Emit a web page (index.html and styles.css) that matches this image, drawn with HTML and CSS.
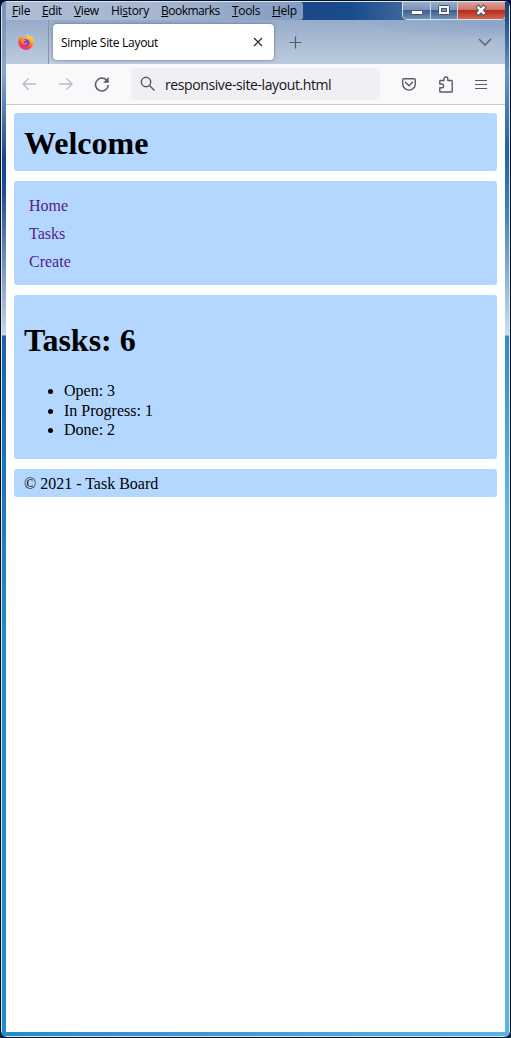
FILE: index.html
```html
<!DOCTYPE html>
<html lang="en">
<head>
<meta charset="utf-8">
<title>Simple Site Layout</title>
<link rel="stylesheet" href="styles.css">
</head>
<body>
<div class="desktop">
<div class="window">
  <div class="edge edge-left"></div>
  <div class="client">
    <div class="titlebar">
      <div class="menu">
        <span class="m-file"><u>F</u>ile</span><span class="m-edit"><u>E</u>dit</span><span class="m-view"><u>V</u>iew</span><span class="m-history">Hi<u>s</u>tory</span><span class="m-bookmarks"><u>B</u>ookmarks</span><span class="m-tools"><u>T</u>ools</span><span class="m-help"><u>H</u>elp</span>
      </div>
      <div class="controls">
        <div class="control"><svg width="28" height="18"><rect x="8.500" y="8.500" width="11" height="4" rx="1" fill="#fff" stroke="#46536a"/></svg></div>
        <div class="control"><svg width="26" height="18"><rect x="7.500" y="3.500" width="11" height="9" rx="1" fill="#f5f5f5" stroke="#46536a"/><rect x="10.500" y="6.500" width="5" height="3" fill="#7994b5" stroke="#46536a"/></svg></div>
        <div class="control close"><svg width="46" height="18"><path d="M20.500 5.500l5 5.500M25.500 5.500l-5 5.500" stroke="#535666" stroke-width="4.600" stroke-linecap="square"/><path d="M20.500 5.500l5 5.500M25.500 5.500l-5 5.500" stroke="#fff" stroke-width="2.600" stroke-linecap="square"/></svg></div>
      </div>
    </div>
    <div class="tabs">
      <div class="pinned">
        <svg width="18" height="18" viewBox="0 0 18 18">
          <defs>
            <linearGradient id="flame" x1=".8" y1="0" x2=".25" y2="1"><stop offset="0" stop-color="#fff044"/><stop offset=".35" stop-color="#ffae27"/><stop offset=".65" stop-color="#ff4b3b"/><stop offset="1" stop-color="#e9207c"/></linearGradient>
          </defs>
          <path d="M11 1c.4 1.500 1.500 2.200 2.600 3.300l.7-.9c1.600 1.600 2.400 3.700 2.400 5.700a7.700 7.700 0 0 1-15.400.3c-.1-2.200.7-4.200 2-5.600l.6 1.300 1.500-1.900.8 1.500c1-.2 2.400-.2 3.400.4C9.300 3.600 9.700 2 11 1z" fill="url(#flame)"/>
          <path d="M6.200 6.500c2-.9 6.200-.4 6.400 2.700.1 2.500-1.700 4-3.700 4s-3.800-1.600-3.800-3.700c0-1.200.4-2.200 1.100-3z" fill="#7542e5"/>
          <path d="M4.200 6.500c1.500-.6 3.300-.4 4.500.9-.7 1.200-2.200.9-2.500 2.100 1.500 1.400 3.200.8 4.300-.2-.2 2.100-2.300 3-4 2.300-1.800-.8-2.700-2.900-2.300-5.100z" fill="#ff8b1f"/>
        </svg>
      </div>
      <div class="tab">
        <span class="tab-title">Simple Site Layout</span>
        <svg width="10" height="10"><path d="M1 1l8 8M9 1l-8 8" stroke="#25242c" stroke-width="1.200"/></svg>
      </div>
      <svg class="plus" width="13" height="13"><path d="M6.500 .5v12M.5 6.500h12" stroke="#555866" stroke-width="1.200"/></svg>
      <svg class="chevron" width="14" height="9"><path d="M1 1l6 6 6-6" fill="none" stroke="#5b5b68" stroke-width="1.300"/></svg>
    </div>
    <div class="toolbar">
      <svg class="back" width="16" height="14"><path d="M15 7H1.500M7.500 1.500l-5.500 5.500 5.500 5.500" fill="none" stroke="#bbbbc0" stroke-width="1.400"/></svg>
      <svg class="forward" width="16" height="14"><path d="M1 7h13.500M8.500 1.500l5.500 5.500-5.500 5.500" fill="none" stroke="#bbbbc0" stroke-width="1.400"/></svg>
      <svg class="reload" width="16" height="16"><path d="M13.800 6A6.400 6.400 0 1 0 14.300 9" fill="none" stroke="#5b5b66" stroke-width="1.500"/><path d="M14.700 1v5.800H9z" fill="#5b5b66"/></svg>
      <div class="address">
        <svg width="16" height="16"><circle cx="6" cy="6" r="4.700" fill="none" stroke="#5b5b66" stroke-width="1.500"/><path d="M9.500 9.500l5 5" stroke="#5b5b66" stroke-width="1.500"/></svg>
        <span class="url">responsive-site-layout.html</span>
      </div>
      <svg class="pocket" width="14" height="13"><path d="M2 .8h10q1.300 0 1.300 1.300v4a6.300 6 0 0 1-12.600 0v-4Q.7.800 2 .8zM3.500 4.300L7 7.700l3.500-3.400" fill="none" stroke="#5b5b66" stroke-width="1.400" stroke-linecap="round" stroke-linejoin="round"/></svg>
      <svg class="extension" width="14" height="17"><path d="M.8 15.700V11.800H2.500q2.100 0 2.100-1.900T2.500 8H.8V5.100Q.8 4.500 1.500 4.500H5V3q0-2 1.900-2t1.900 2v1.500h3.600q.8 0 .8.800v9.900q0 .8-.8.800H1.500q-.7 0-.7-.3z" fill="none" stroke="#5b5b66" stroke-width="1.400" stroke-linejoin="round"/></svg>
      <svg class="hamburger" width="12" height="11"><path d="M0 1.500h12M0 5.500h12M0 9.500h12" stroke="#5b5b66" stroke-width="1.200"/></svg>
    </div>
    <div class="page">
      <header class="box page-header"><h1>Welcome</h1></header>
      <nav class="box"><a>Home</a><a>Tasks</a><a>Create</a></nav>
      <main class="box">
        <h1>Tasks: 6</h1>
        <ul><li>Open: 3</li><li>In Progress: 1</li><li>Done: 2</li></ul>
      </main>
      <footer class="box">© 2021 - Task Board</footer>
    </div>
  </div>
  <div class="edge edge-right"></div>
</div>
</div>
</body>
</html>
```
FILE: styles.css
```css
* { box-sizing: border-box; }
html, body { margin: 0; height: 100%; overflow: hidden; }
svg { display: block; flex: none; }
.desktop { height: 1038px; background: linear-gradient(#000a40, #0b2b40); }
.window {
  height: 1038px;
  display: grid;
  grid-template-columns: 4px 1fr 4px;
  border: 1px solid #07111f;
  border-radius: 7px;
  overflow: hidden;
  background: linear-gradient(90deg, #268acb, #5bb4e2);
  box-shadow: inset 0 0 0 1px #d2e8f5;
  padding: 1px;
}
.edge-left { background: linear-gradient(#7890b5 0, #8ba7cb 70px, #174889 158px, #214e91 190px, #cbd5e8 333px, #2062a8 334px, #278bcb 650px, #268acb 100%); }
.edge-right { background: linear-gradient(#173a74 0, #6694c2 70px, #2361a5 148px, #4383b6 210px, #cbe0ec 333px, #318cc3 334px, #62b7df 500px, #5bb4e2 100%); }
.client { height: 1030px; display: flex; flex-direction: column; background: #fff; }
.titlebar {
  height: 18px;
  display: flex;
  justify-content: space-between;
  background: linear-gradient(90deg, #6381aa 0, #1c4786 300px, #194b8c 345px, #3e689d 400px, #7893b8);
}
.menu {
  width: 297px;
  height: 18px;
  display: flex;
  padding-left: 6px;
  border-radius: 0 3px 3px 0;
  background: linear-gradient(90deg, #adbdd5, #a6b6d0 50%, #829bc0);
  font: 12px/18px "Open Sans", sans-serif;
  color: #000;
  white-space: nowrap;
}
.menu u { text-underline-offset: 1px; text-decoration-thickness: 1px; }
.m-file { width: 30px; letter-spacing: -.2px; }
.m-edit { width: 32px; letter-spacing: -.4px; }
.m-view { width: 37px; letter-spacing: -.4px; }
.m-history { width: 50px; letter-spacing: -.3px; }
.m-bookmarks { width: 71px; letter-spacing: -.5px; }
.m-tools { width: 40px; letter-spacing: -.35px; }
.m-help { letter-spacing: -.3px; }
.controls {
  display: flex;
  flex: none;
  width: 104px;
  height: 18px;
  margin-right: -1px;
  border: 1px solid #d7e1ec;
  border-top: 0;
  border-radius: 0 0 5px 5px;
  overflow: hidden;
}
.control {
  width: 28px;
  border-right: 1px solid #c7d4e3;
  background: linear-gradient(#98aeca 0, #7893b8 48%, #3d608d 50%, #6e91b9);
}
.control:nth-child(2) { width: 27px; }
.control.close { width: 47px; border: 0; background: linear-gradient(#dca49c 0, #cf7669 45%, #b52c18 50%, #d16550); }
.tabs {
  height: 44px;
  display: flex;
  background:
    radial-gradient(ellipse 150px 20px at 100% 0, #8ba5c6, rgba(139, 165, 198, 0)),
    linear-gradient(#96abca, #a9bad3 45%, #bccbdd);
}
.pinned { width: 43px; padding: 13px 0 0 11px; border-right: 1px solid #8594aa; }
.tab {
  width: 221px;
  height: 36px;
  margin: 4px 0 0 4px;
  padding: 0 11px 0 8px;
  display: flex;
  align-items: center;
  justify-content: space-between;
  border-radius: 4px;
  background: #fff;
  box-shadow: 0 0 3px rgba(50, 65, 100, .65);
}
.tab-title { font: 12px/18px "Open Sans", sans-serif; letter-spacing: -.3px; padding-top: 2px; }
.plus { margin: 16px 0 0 15px; }
.chevron { margin: 18px 13px 0 auto; }
.toolbar {
  height: 41px;
  display: flex;
  align-items: center;
  background: #f9f9fb;
  border-bottom: 1px solid #cccccf;
}
.back { margin-left: 15px; }
.forward { margin-left: 21px; }
.reload { margin-left: 20px; }
.address {
  width: 249px;
  height: 32px;
  margin-left: 21px;
  padding-left: 9px;
  display: flex;
  align-items: center;
  border-radius: 4px;
  background: #f0f0f4;
}
.url { margin-left: 9px; padding-top: 2px; font: 14px/20px "Open Sans", sans-serif; letter-spacing: -.4px; color: #15141a; white-space: nowrap; }
.pocket { margin-left: 22px; }
.extension { margin-left: 23px; }
.hamburger { margin-left: 22px; }
.page {
  padding: 8px;
  display: grid;
  gap: 10px;
  font: 16px/20px "Liberation Serif", serif;
  color: #000;
}
.box { background: #b3d7ff; border-radius: 3px; padding: 0 10px; }
.page h1 { font-size: 32px; line-height: 36px; margin: 0; }
.page-header { height: 58px; padding-top: 12px; }
nav { height: 104px; display: flex; flex-direction: column; padding-top: 11px !important; }
nav a { color: #551a8b; height: 28px; line-height: 28px; padding-left: 5px; }
main { height: 164px; padding-top: 27px !important; }
main ul { margin: 23px 0 0; padding-left: 40px; }
main li { height: 19.500px; line-height: 20px; }
footer { height: 28px; line-height: 30px; }
```
